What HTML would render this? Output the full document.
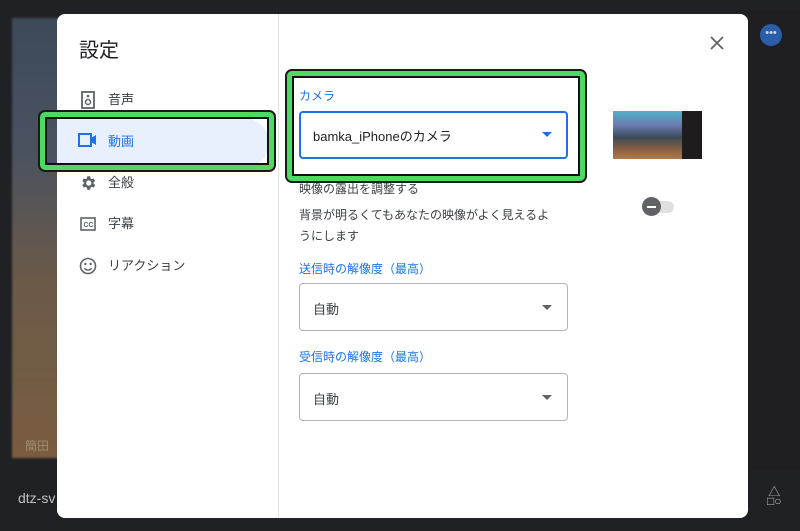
<!DOCTYPE html>
<html><head><meta charset="utf-8"><style>
*{margin:0;padding:0;box-sizing:border-box}
body{width:800px;height:531px;background:#202124;position:relative;overflow:hidden;font-family:"Liberation Sans","Noto Sans CJK JP",sans-serif}
.tile{position:absolute;left:12px;top:18px;width:773px;height:440px;background:linear-gradient(180deg,#3d4a58 0%,#4a5260 30%,#6b5a48 60%,#7a5d40 100%);filter:blur(1px)}
.right{position:absolute;left:748px;top:10px;width:52px;height:460px;background:#1f1f22}
.dlg{position:absolute;left:57px;top:14px;width:691px;height:504px;background:#fff;border-radius:8px;overflow:hidden}
.div{position:absolute;left:221px;top:0;width:1px;height:100%;background:#e3e3e3}
.t{position:absolute;color:#3c4043;font-size:13px;white-space:nowrap}
.g{position:absolute;border:5px solid #4cd964;outline:2px solid #1a1a1a;border-radius:5px;box-shadow:inset 0 0 0 2px #111}
.sel{position:absolute;border:1px solid #b0b4b8;border-radius:4px;background:#fff}
.arr{position:absolute;width:0;height:0;border-left:5px solid transparent;border-right:5px solid transparent;border-top:5px solid #5f6368}
</style></head><body>
<div class="tile"></div>
<div class="right"></div>
<div style="position:absolute;left:760px;top:24px;width:22px;height:22px;border-radius:50%;background:#2a5ea8;color:#cfd8e8;font-size:11px;text-align:center;line-height:18px">•••</div>
<div class="t" style="left:25px;top:437px;color:#a08a70;font-size:12px">簡田</div>
<div class="t" style="left:18px;top:490px;color:#bdc1c6;font-size:14px">dtz-sv</div>
<div class="t" style="left:767px;top:488px;color:#bdc1c6;font-size:12px;line-height:9px;text-align:center">△<br>□○</div>
<div class="dlg">
 <div class="div"></div>
 <div class="t" style="left:22px;top:20px;font-size:20px;color:#202124">設定</div>
 <div style="position:absolute;left:0;top:104px;width:212px;height:50px;background:#e8f0fe;border-radius:0 25px 25px 0"></div>
 <svg style="position:absolute;left:24px;top:77px" width="14" height="18"><rect x="1" y="1" width="12" height="16" fill="none" stroke="#5f6368" stroke-width="1.8"/><circle cx="7" cy="5" r="1.3" fill="#5f6368"/><circle cx="7" cy="11" r="2.5" fill="none" stroke="#5f6368" stroke-width="1.5"/></svg>
 <div class="t" style="left:51px;top:75px">音声</div>
 <svg style="position:absolute;left:21px;top:119px" width="20" height="14"><rect x="1" y="1" width="12" height="12" fill="none" stroke="#1a73e8" stroke-width="2"/><path d="M13 5L18 2V12L13 9Z" fill="#1a73e8"/></svg>
 <div class="t" style="left:51px;top:117px;color:#1a73e8">動画</div>
 <svg style="position:absolute;left:22px;top:160px" width="18" height="18" viewBox="0 0 24 24"><path fill="#5f6368" d="M19.4 13a7.5 7.5 0 000-2l2.1-1.6-2-3.5-2.5 1a7 7 0 00-1.7-1L15 3h-4l-.4 2.9a7 7 0 00-1.7 1l-2.5-1-2 3.5L6.5 11a7.5 7.5 0 000 2l-2.1 1.6 2 3.5 2.5-1a7 7 0 001.7 1L11 21h4l.4-2.9a7 7 0 001.7-1l2.5 1 2-3.5zM13 15.5A3.5 3.5 0 1113 8.5a3.5 3.5 0 010 7z"/></svg>
 <div class="t" style="left:51px;top:158px">全般</div>
 <svg style="position:absolute;left:23px;top:203px" width="16" height="14"><rect x="1" y="1" width="14" height="12" fill="none" stroke="#5f6368" stroke-width="1.6"/><text x="3.5" y="10" font-size="7" font-weight="bold" fill="#5f6368" font-family="Liberation Sans">CC</text></svg>
 <div class="t" style="left:51px;top:199px">字幕</div>
 <svg style="position:absolute;left:22px;top:243px" width="18" height="18"><circle cx="9" cy="9" r="7.5" fill="none" stroke="#5f6368" stroke-width="1.6"/><circle cx="6.3" cy="7" r="1.2" fill="#5f6368"/><circle cx="11.7" cy="7" r="1.2" fill="#5f6368"/><path d="M5.5 11a4 4 0 007 0" fill="none" stroke="#5f6368" stroke-width="1.5"/></svg>
 <div class="t" style="left:51px;top:241px">リアクション</div>
 <svg style="position:absolute;left:653px;top:22px" width="14" height="14"><path d="M1 1L13 13M13 1L1 13" stroke="#5f6368" stroke-width="1.8"/></svg>

 <div class="t" style="left:242px;top:73px;color:#1a73e8;font-size:12px">カメラ</div>
 <div class="sel" style="left:242px;top:97px;width:269px;height:48px;border:2px solid #1a73e8"></div>
 <div class="t" style="left:256px;top:112px;color:#202124">bamka_iPhoneのカメラ</div>
 <div class="arr" style="left:485px;top:118px;border-top-color:#1a73e8"></div>
 <div style="position:absolute;left:556px;top:97px;width:89px;height:48px;background:linear-gradient(180deg,#4fb0c8 0%,#6a7ab0 30%,#3a4a58 55%,#8a6040 80%,#b07a48 100%)"></div>
 <div style="position:absolute;left:625px;top:97px;width:20px;height:48px;background:#1e1c1c"></div>
 <div class="t" style="left:242px;top:166px;font-size:12px">映像の露出を調整する</div>
 <div class="t" style="left:242px;top:191px;font-size:12px;line-height:21px">背景が明るくてもあなたの映像がよく見えるよ<br>うにします</div>
 <div style="position:absolute;left:587px;top:187px;width:30px;height:12px;border-radius:6px;background:#e0e0e0"></div>
 <div style="position:absolute;left:585px;top:183px;width:19px;height:19px;border-radius:50%;background:#5f6368"></div>
 <div style="position:absolute;left:590px;top:192px;width:9px;height:2px;background:#fff"></div>
 <div class="t" style="left:242px;top:246px;color:#1a73e8;font-size:12px">送信時の解像度（最高）</div>
 <div class="sel" style="left:242px;top:269px;width:269px;height:48px"></div>
 <div class="t" style="left:256px;top:285px">自動</div>
 <div class="arr" style="left:485px;top:291px"></div>
 <div class="t" style="left:242px;top:334px;color:#1a73e8;font-size:12px">受信時の解像度（最高）</div>
 <div class="sel" style="left:242px;top:359px;width:269px;height:48px"></div>
 <div class="t" style="left:256px;top:375px">自動</div>
 <div class="arr" style="left:485px;top:381px"></div>
</div>
<div class="g" style="left:40px;top:112px;width:234px;height:58px"></div>
<div class="g" style="left:287px;top:71px;width:298px;height:110px"></div>
</body></html>
